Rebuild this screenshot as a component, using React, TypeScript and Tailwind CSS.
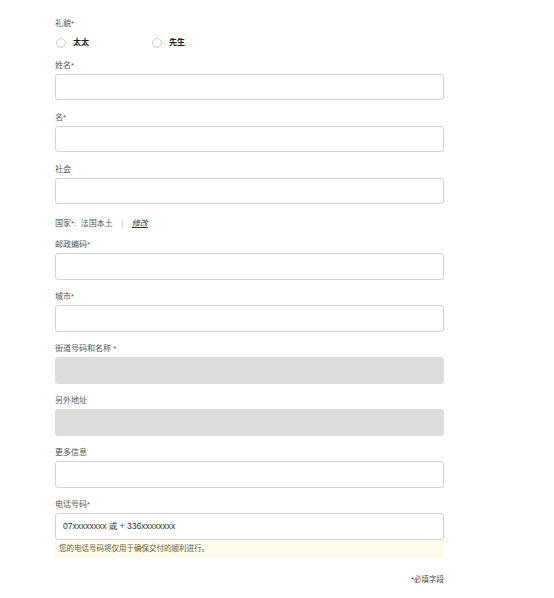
import React from "react";

const font = { fontFamily: '"Liberation Sans", "Noto Sans CJK SC", sans-serif' };

function Label({ children }: { children: React.ReactNode }) {
  return <div className="text-[8px] leading-[10px] text-[#555] mb-[3px]">{children}</div>;
}

function Field({ label, gray, placeholder }: { label: string; gray?: boolean; placeholder?: string }) {
  return (
    <div className="mt-[12.5px]">
      <Label>{label}</Label>
      <div
        className={
          gray
            ? "h-[26.5px] rounded-[3px] bg-[#dcdcdc]"
            : "h-[26.5px] rounded-[3px] border border-[#d2d2d2] bg-white flex items-center px-[7px] text-[8.5px] text-[#333]"
        }
      >
        {placeholder}
      </div>
    </div>
  );
}

function Radio({ label }: { label: string }) {
  return (
    <div className="flex items-center gap-[7px]">
      <span className="w-[10px] h-[10px] rounded-full border border-[#cfcfcf] bg-white" />
      <span className="text-[8px] leading-[10px] font-bold text-[#222]">{label}</span>
    </div>
  );
}

export default function App() {
  return (
    <div className="w-[554px] h-[598px] bg-white" style={font}>
      <div className="ml-[55px] w-[389px] pt-[19px]">
        <Label>礼貌*</Label>
        <div className="flex mt-[9px] h-[10px]">
          <div className="w-[96px] ml-[1px]">
            <Radio label="太太" />
          </div>
          <Radio label="先生" />
        </div>
        <div className="mt-[3px]">
          <Field label="姓名*" />
          <Field label="名*" />
          <Field label="社会" />
        </div>
        <div className="mt-[15px] flex items-center text-[8px] leading-[10px] text-[#555]">
          <span>国家*:&nbsp;&nbsp;法国本土</span>
          <span className="ml-[9px] w-px h-[8px] bg-[#ddd]" />
          <span className="ml-[9px] italic underline text-[#333]">修改</span>
        </div>
        <div className="-mt-[1.5px]">
          <Field label="邮政编码*" />
          <Field label="城市*" />
          <Field label="街道号码和名称 *" gray />
          <Field label="另外地址" gray />
          <Field label="更多信息" />
          <Field label="电话号码*" placeholder="07xxxxxxxx 或 + 336xxxxxxxx" />
        </div>
        <div className="mt-[1px] h-[17px] bg-[#fcfae8] flex items-center px-[4px] text-[7.5px] text-[#6a5e3a]">
          您的电话号码将仅用于确保交付的顺利进行。
        </div>
        <div className="mt-[17px] text-right text-[7.5px] leading-[10px] text-[#444]">*必填字段</div>
      </div>
    </div>
  );
}
